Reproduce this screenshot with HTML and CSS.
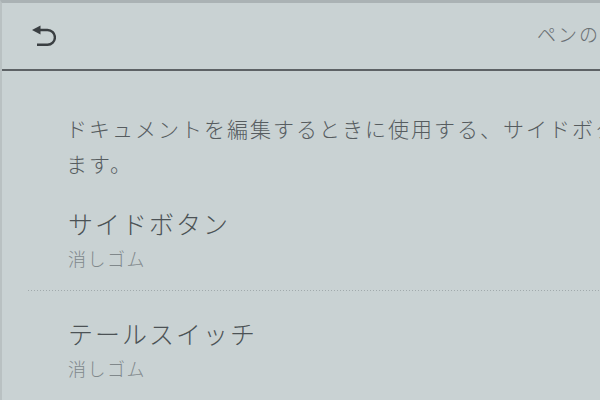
FILE: index.html
```html
<!DOCTYPE html>
<html lang="ja">
<head>
<meta charset="utf-8">
<link rel="stylesheet" href="styles.css">
</head>
<body>
<div class="screen">
  <header class="header">
    <svg class="back" viewBox="0 0 24 24" width="24" height="24" aria-hidden="true">
      <polygon points="0,5 8.5,0.5 8.5,9.5" fill="#3a3f42"/>
      <path d="M7 5 H15.5 A7.4 7.4 0 0 1 15.5 19.8 H5" fill="none" stroke="#3a3f42" stroke-width="2.4"/>
    </svg>
    <div class="title">ペンのボタン設定</div>
  </header>
  <div class="desc">
    <div class="line">ドキュメントを編集するときに使用する、サイドボタンとテールスイッチの機能を選択し</div>
    <div class="line">ます。</div>
  </div>
  <div class="list">
    <div class="item divided">
      <div class="item-title">サイドボタン</div>
      <div class="item-sub">消しゴム</div>
    </div>
    <div class="item">
      <div class="item-title">テールスイッチ</div>
      <div class="item-sub">消しゴム</div>
    </div>
  </div>
</div>
</body>
</html>
```
FILE: styles.css
```css
html, body {
  margin: 0;
  padding: 0;
  width: 600px;
  height: 400px;
  overflow: hidden;
  background: #c9d2d3;
}
.screen {
  width: 600px;
  height: 400px;
  box-sizing: border-box;
  border-top: 3px solid #aab2b4;
  border-left: 2px solid #b9c1c2;
  font-family: "Noto Sans CJK JP", "Noto Sans", sans-serif;
  font-weight: 300;
  overflow: hidden;
}
.header {
  height: 66px;
  display: flex;
  align-items: center;
  padding-left: 30px;
  border-bottom: 2px solid #5d6265;
  white-space: nowrap;
  overflow: hidden;
}
.back {
  flex: none;
  margin-top: 1px;
}
.title {
  margin-left: 481px;
  margin-top: -6px;
  font-size: 19px;
  letter-spacing: 2px;
  color: #6a7073;
  flex: none;
}
.desc {
  padding-top: 40px;
  padding-left: 64px;
  font-size: 21px;
  letter-spacing: 2px;
  line-height: 35px;
  color: #565c5f;
  white-space: nowrap;
}
.list {
  margin-left: 26px;
}
.item {
  padding: 26px 0 19px 40px;
}
.divided {
  background: linear-gradient(to right, #a1aaac 1px, transparent 1px) 0 100% / 3px 1px repeat-x;
  padding-bottom: 20px;
}
.item-title {
  font-size: 25px;
  line-height: 32px;
  letter-spacing: 2px;
  color: #4c5255;
  white-space: nowrap;
}
.item-sub {
  margin-top: 6px;
  font-size: 18px;
  line-height: 26px;
  letter-spacing: 1.5px;
  color: #80888b;
  white-space: nowrap;
}
```
